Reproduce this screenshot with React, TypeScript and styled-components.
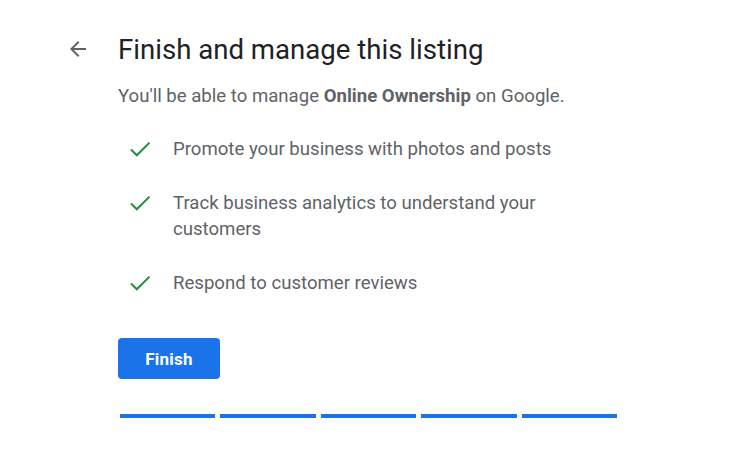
import styled, { createGlobalStyle } from 'styled-components';

const GlobalStyle = createGlobalStyle`
  html, body {
    margin: 0;
    padding: 0;
    background: #ffffff;
    font-family: Roboto, "Noto Sans", Arial, sans-serif;
  }
`;

const StPage = styled.div`
  width: 750px;
  height: 450px;
  box-sizing: border-box;
  padding: 33px 0 0 66px;
`;

const StHeader = styled.div`
  display: flex;
  align-items: center;
  gap: 28px;
  height: 32px;
`;

const StBack = styled.button`
  border: 0;
  background: none;
  padding: 0;
  width: 24px;
  height: 24px;
  display: flex;
  color: #5f6368;
  cursor: pointer;
`;

const StTitle = styled.h1`
  margin: 0;
  font-size: 27.6px;
  font-weight: 400;
  color: #202124;
  white-space: nowrap;
`;

const StBody = styled.div`
  padding-left: 52px;
`;

const StSubtitle = styled.p`
  margin: 18px 0 0;
  font-size: 18.6px;
  line-height: 26px;
  color: #5f6368;

  b {
    font-weight: 700;
  }
`;

const StList = styled.ul`
  list-style: none;
  margin: 27px 0 0;
  padding: 0 0 0 10px;
  display: flex;
  flex-direction: column;
  gap: 28px;
`;

const StItem = styled.li`
  display: flex;
  align-items: flex-start;
  gap: 20px;
  font-size: 18.6px;
  line-height: 26px;
  color: #5f6368;
  max-width: 440px;
`;

const StCheck = styled.span`
  flex: none;
  width: 25px;
  height: 26px;
  display: flex;
  align-items: center;
  color: #1e8e3e;
`;

const StButton = styled.button`
  display: block;
  margin-top: 42px;
  width: 102px;
  height: 41px;
  border: 0;
  border-radius: 4px;
  background: #1a73e8;
  color: #ffffff;
  font-family: Roboto, Arial, sans-serif;
  font-size: 17px;
  font-weight: 700;
  letter-spacing: 0.2px;
  cursor: pointer;
`;

const StProgress = styled.div`
  margin: 35px 0 0 2px;
  width: 497px;
  display: flex;
  gap: 5px;
`;

const StStep = styled.div<{ $done: boolean }>`
  flex: 1;
  height: 4px;
  background: ${(p) => (p.$done ? '#1a73e8' : '#dadce0')};
`;

const CheckIcon = () => (
  <svg width="24" height="24" viewBox="0 0 24 24" fill="none">
    <path d="M3 12.5l5.8 5.8L21.5 5.6" stroke="currentColor" strokeWidth="2" />
  </svg>
);

const ArrowIcon = () => (
  <svg width="24" height="24" viewBox="0 0 24 24" fill="currentColor">
    <path d="M20 11H7.83l5.59-5.59L12 4l-8 8 8 8 1.41-1.41L7.83 13H20v-2z" />
  </svg>
);

const perks = [
  'Promote your business with photos and posts',
  'Track business analytics to understand your customers',
  'Respond to customer reviews',
];

const steps = [true, true, true, true, true];

export default function App() {
  return (
    <>
      <GlobalStyle />
      <StPage>
        <StHeader>
          <StBack aria-label="Back">
            <ArrowIcon />
          </StBack>
          <StTitle>Finish and manage this listing</StTitle>
        </StHeader>
        <StBody>
          <StSubtitle>
            You'll be able to manage <b>Online Ownership</b> on Google.
          </StSubtitle>
          <StList>
            {perks.map((perk) => (
              <StItem key={perk}>
                <StCheck>
                  <CheckIcon />
                </StCheck>
                {perk}
              </StItem>
            ))}
          </StList>
          <StButton>Finish</StButton>
          <StProgress>
            {steps.map((done, i) => (
              <StStep key={i} $done={done} />
            ))}
          </StProgress>
        </StBody>
      </StPage>
    </>
  );
}
